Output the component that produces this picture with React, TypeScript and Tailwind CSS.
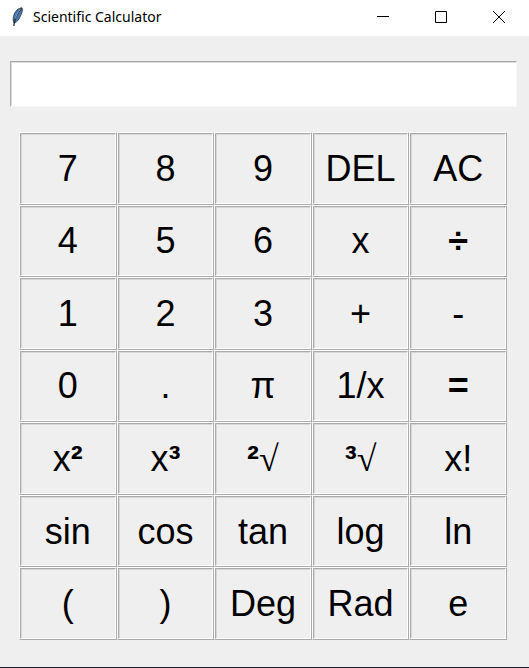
import type { ReactNode } from "react";

type Key = { name: string; face: ReactNode };

const key = (name: string, face: ReactNode = name): Key => ({ name, face });

const power = (digit: string) => <span className="font-bold">{digit}</span>;
const radical = <span className="font-['Liberation_Serif',serif]">√</span>;

const keys: Key[] = [
  key("7"), key("8"), key("9"), key("DEL"), key("AC"),
  key("4"), key("5"), key("6"), key("x"), key("÷", <span className="font-bold">÷</span>),
  key("1"), key("2"), key("3"), key("+"), key("-"),
  key("0"), key("."), key("π"), key("1/x"), key("=", <span className="font-bold">=</span>),
  key("x²", <>x{power("²")}</>), key("x³", <>x{power("³")}</>),
  key("²√", <>{power("²")}{radical}</>), key("³√", <>{power("³")}{radical}</>), key("x!"),
  key("sin"), key("cos"), key("tan"), key("log"), key("ln"),
  key("("), key(")"), key("Deg"), key("Rad"), key("e"),
];

function Feather() {
  return (
    <svg width="14" height="20" viewBox="0 0 14 20" aria-hidden="true">
      <path d="M11 .8C7.500 1 3.800 4 2.500 9.500c-.5 2.500-.5 4.500.5 6.500 2 0 4.800-3 6.200-6.500C10.500 6.500 12.300 3 11 .8Z" fill="#4479b4" stroke="#3f464d" />
      <path d="M10.500 1.500C6.500 6 3.500 11 2.800 19" fill="none" stroke="#1d2733" strokeWidth="1.200" />
      <path d="M9.500 2.500C7 5 5 8.500 4.500 11.500" fill="none" stroke="#a4c4e4" strokeWidth=".8" />
    </svg>
  );
}

function TitleBar() {
  const control = "flex h-9 w-[58px] items-center justify-center";
  return (
    <header className="flex h-9 items-center bg-white pr-px pb-[2px] pl-[11px]">
      <Feather />
      <h1 className="ml-2 grow font-['Noto_Sans','Open_Sans',sans-serif] text-[14px] leading-5 text-black">
        Scientific Calculator
      </h1>
      <button type="button" aria-label="Minimize" className={control}>
        <svg width="12" height="12" viewBox="0 0 12 12"><path d="M0 5.500h12" stroke="#000" /></svg>
      </button>
      <button type="button" aria-label="Maximize" className={control}>
        <svg width="12" height="12" viewBox="0 0 12 12"><path d="M.5.5h11v11H.5z" fill="none" stroke="#000" /></svg>
      </button>
      <button type="button" aria-label="Close" className={control}>
        <svg width="12" height="12" viewBox="0 0 12 12"><path d="m0 0 12 12M12 0 0 12" stroke="#000" /></svg>
      </button>
    </header>
  );
}

export default function App() {
  return (
    <div className="flex min-h-screen flex-col border-b border-[#1c2030] bg-[#efefef] font-['Liberation_Sans',Arial,sans-serif] text-black">
      <TitleBar />
      <main className="grow pt-[25px] pb-[27px]">
        <div className="mr-3 ml-[10px]">
          <input
            type="text"
            aria-label="Display"
            className="block h-[46px] w-full border border-t-[#a5a5a5] border-r-[#f7f7f7] border-b-[#f7f7f7] border-l-[#b0b0b0] bg-white px-2 text-right text-[36px] shadow-[inset_1px_1px_0_#dcdcdc] outline-none"
          />
        </div>
        <div className="mt-[25px] mr-[22px] ml-[19px] grid h-[508px] grid-cols-5 grid-rows-7">
          {keys.map(({ name, face }) => (
            <button
              key={name}
              type="button"
              aria-label={name}
              className="flex border border-t-white border-r-[#aaaaaa] border-b-[#aaaaaa] border-l-white text-[36px] leading-10"
            >
              <span className="flex h-full w-full items-center justify-center border border-t-[#aaaaaa] border-r-white border-b-white border-l-[#aaaaaa] pt-px shadow-[inset_1px_1px_0_#d8d8d8]">
                <span>{face}</span>
              </span>
            </button>
          ))}
        </div>
      </main>
    </div>
  );
}
